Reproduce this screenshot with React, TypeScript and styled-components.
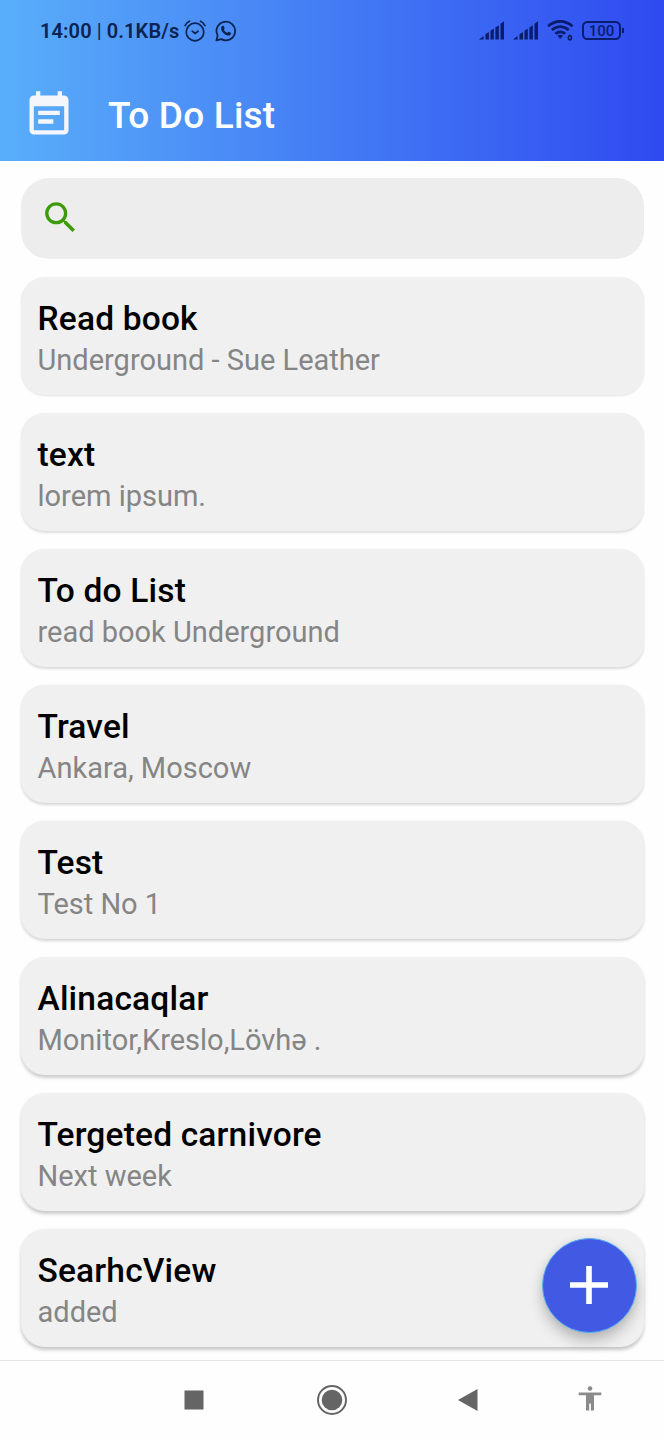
import React from "react";
import styled, { createGlobalStyle } from "styled-components";

const GlobalStyle = createGlobalStyle`
  * { box-sizing: border-box; }
  body { margin: 0; background: #fff; font-family: Roboto, "Noto Sans", sans-serif; }
  h1, h2, p { margin: 0; }
  svg { display: block; flex: none; }
`;

const Screen = styled.div`
  position: relative;
  width: 664px;
  height: 1440px;
  display: flex;
  flex-direction: column;
  overflow: hidden;
  background: #fefefe;
`;

const Header = styled.header`
  height: 160.5px;
  flex: none;
  background: linear-gradient(90deg, #59aefa 0%, #447cf4 50%, #2f4af0 100%);
`;

const StatusBar = styled.div`
  height: 62px;
  padding: 0 43px 0 40px;
  display: flex;
  align-items: center;
  justify-content: space-between;
  color: #0b2350;
`;

const StatusGroup = styled.div<{ $gap: number }>`
  display: flex;
  align-items: center;
  gap: ${(p) => p.$gap}px;
`;

const StatusText = styled.span`
  width: 139px;
  font-size: 20px;
  line-height: 24px;
  font-weight: 600;
  letter-spacing: 0.1px;
  white-space: pre;
`;

const Divider = styled.span`
  font-weight: 400;
`;

const TitleBar = styled.div`
  display: flex;
  align-items: center;
  height: 98px;
  padding: 0 22.5px;
  gap: 33.5px;
`;

const CalendarIcon = styled.svg`
  width: 52px;
  height: 52px;
  margin-top: 7px;
`;

const AppTitle = styled.h1`
  font-size: 37px;
  line-height: 44px;
  font-weight: 500;
  letter-spacing: 0.2px;
  color: #fff;
  padding-top: 9px;
`;

const Content = styled.main`
  flex: 1;
  min-height: 0;
  padding: 17.5px 20.5px 0;
`;

const SearchBox = styled.div`
  height: 80.5px;
  border-radius: 28px;
  background: #ededed;
  padding: 0 0 1px 19px;
  display: flex;
  align-items: center;
  color: #3c9a0b;
`;

const List = styled.div`
  display: flex;
  flex-direction: column;
  gap: 17.5px;
  margin-top: 18px;
`;

const Card = styled.article<{ $depth: number }>`
  height: 118.5px;
  flex: none;
  border-radius: 24px;
  background: #f0f0f0;
  padding: 22px 17px 0;
  box-shadow: 0 ${(p) => 1 + p.$depth * 0.22}px ${(p) => 2 + p.$depth * 0.25}px
    rgba(0, 0, 0, ${(p) => 0.11 + p.$depth * 0.015});
`;

const CardTitle = styled.h2`
  font-size: 33.5px;
  line-height: 40px;
  font-weight: 500;
  letter-spacing: 0.18px;
  color: #000;
`;

const CardText = styled.p`
  font-size: 29px;
  line-height: 34px;
  margin-top: 4px;
  color: #858585;
`;

const AddButton = styled.button`
  position: absolute;
  left: 542px;
  top: 1238px;
  width: 95px;
  height: 95px;
  padding: 0 1px 1px 0;
  border: 1px solid #58b0f4;
  border-radius: 50%;
  background: #4259e3;
  display: flex;
  align-items: center;
  justify-content: center;
  box-shadow: 0 8px 14px rgba(0, 0, 0, 0.22), 0 1px 8px rgba(0, 0, 0, 0.06);
`;

const NavBar = styled.nav`
  height: 80px;
  flex: none;
  border-top: 1px solid #e3e3e3;
  background: #fefefe;
  padding: 0 7px 1.5px 125px;
  display: grid;
  grid-template-columns: 138px 138px 134px 110px;
  align-items: center;
  justify-items: center;
  color: #656565;
`;

const todos = [
  { title: "Read book", text: "Underground - Sue Leather" },
  { title: "text", text: "lorem ipsum." },
  { title: "To do List", text: "read book Underground" },
  { title: "Travel", text: "Ankara, Moscow" },
  { title: "Test", text: "Test No 1" },
  { title: "Alinacaqlar", text: "Monitor,Kreslo,Lövhə ." },
  { title: "Tergeted carnivore", text: "Next week" },
  { title: "SearhcView", text: "added" },
];

const AlarmIcon = () => (
  <svg width="22" height="22" viewBox="0 0 22 22" fill="none" stroke="currentColor" strokeWidth="1.7" strokeLinecap="round">
    <circle cx="11" cy="12" r="8.8" />
    <path d="M1.1 5.5Q2.5 2.6 5.4 1.2M20.9 5.5Q19.5 2.6 16.6 1.2M8.2 11.2L11 13.4L14 11.2" />
  </svg>
);

const WhatsAppIcon = () => (
  <svg width="22" height="22" viewBox="0 0 22 22">
    <path d="M1.4 20.4L2.7 15.5A9.3 9.3 0 1 1 6.3 19.1Z" fill="none" stroke="currentColor" strokeWidth="1.8" strokeLinejoin="round" />
    <path d="M7.5 5.8c.5-.2 1-.1 1.200.3l.9 2.100c.1.4-.7 1.200-.7 1.600.7 1.400 1.800 2.400 3.300 3 .4 0 1-1.200 1.500-1.100l2.100 1c.5.4.2 1.700-.6 2.300-1.400 1.100-3.800.3-5.700-1.100-1.800-1.400-3.400-3.300-3.400-5.500 0-1.200.6-2.200 1.400-2.600z" fill="currentColor" />
  </svg>
);

const SignalIcon = () => (
  <svg width="26" height="19" viewBox="0 0 26 19" fill="currentColor">
    <path d="M0 18.500L4.600 15V18.500ZM6.500 13.200L9.900 11V18.500H6.500ZM11.500 9.800L14.800 7.600V18.500H11.500ZM16.400 6.500L19.800 4.200V18.500H16.400ZM21.500 2.800L25 .3V18.500H21.500Z" />
  </svg>
);

const WifiIcon = () => (
  <svg width="27" height="21" viewBox="0 0 27 21" fill="none" stroke="currentColor">
    <path d="M1 6.200Q13.200-3.600 25.600 6.200M4.800 10Q13.200 3.200 21.800 10M8.400 13.800Q13.200 9.800 18.200 13.800" strokeWidth="2.700" />
    <path d="M10.400 15.800Q13.200 13.600 16 15.800L13.200 19Z" fill="currentColor" stroke="none" />
    <ellipse cx="22.900" cy="17.700" rx="1.500" ry="2.200" strokeWidth="1.600" />
  </svg>
);

const BatteryShell = styled.div`
  position: relative;
  width: 39px;
  height: 19px;
  border: 2px solid currentColor;
  border-radius: 5.5px;
  font-size: 15px;
  line-height: 16px;
  font-weight: 500;
  text-align: center;
  &::after {
    content: "";
    position: absolute;
    right: -5px;
    top: 5px;
    width: 2px;
    height: 5px;
    background: currentColor;
  }
`;

const RightStatus = styled(StatusGroup)`
  color: #0a1c6c;
  padding-bottom: 2px;
`;

export default function App() {
  return (
    <Screen>
      <GlobalStyle />
      <Header>
        <StatusBar>
          <StatusGroup $gap={5}>
            <StatusText>
              14:00 <Divider>|</Divider> 0.1KB/s
            </StatusText>
            <StatusGroup $gap={9}>
              <AlarmIcon />
              <WhatsAppIcon />
            </StatusGroup>
          </StatusGroup>
          <RightStatus $gap={8}>
            <SignalIcon />
            <SignalIcon />
            <WifiIcon />
            <BatteryShell>100</BatteryShell>
          </RightStatus>
        </StatusBar>
        <TitleBar>
          <CalendarIcon viewBox="0 0 24 24" fill="#f4f6fc">
            <path d="M17 10H7v2h10v-2zm2-7h-1V1h-2v2H8V1H6v2H5c-1.110 0-1.990.9-1.990 2L3 19c0 1.100.89 2 2 2h14c1.100 0 2-.9 2-2V5c0-1.100-.9-2-2-2zm0 16H5V8h14v11zm-5-5H7v2h7v-2z" />
          </CalendarIcon>
          <AppTitle>To Do List</AppTitle>
        </TitleBar>
      </Header>
      <Content>
        <SearchBox>
          <svg width="41" height="41" viewBox="0 0 24 24" fill="currentColor">
            <path d="M15.500 14h-.79l-.28-.27C15.410 12.590 16 11.110 16 9.500 16 5.910 13.090 3 9.500 3S3 5.910 3 9.500 5.910 16 9.500 16c1.610 0 3.090-.59 4.230-1.570l.27.28v.79l5 4.990L20.490 19l-4.990-5zm-6 0C7.010 14 5 11.990 5 9.500S7.010 5 9.500 5 14 7.010 14 9.500 11.990 14 9.500 14z" />
          </svg>
        </SearchBox>
        <List>
          {todos.map((todo, i) => (
            <Card key={todo.title} $depth={i}>
              <CardTitle>{todo.title}</CardTitle>
              <CardText>{todo.text}</CardText>
            </Card>
          ))}
        </List>
      </Content>
      <NavBar>
        <svg width="20" height="20" viewBox="0 0 20 20">
          <rect x=".5" y=".5" width="19" height="19" fill="currentColor" />
        </svg>
        <svg width="30" height="30" viewBox="0 0 30 30">
          <circle cx="15" cy="15" r="14" fill="none" stroke="currentColor" strokeWidth="2" />
          <circle cx="15" cy="15" r="10.300" fill="currentColor" />
        </svg>
        <svg width="20" height="22" viewBox="0 0 20 22">
          <path d="M0 11L19.500 0V22Z" fill="currentColor" />
        </svg>
        <svg width="24" height="27" viewBox="0 0 24 27" fill="#8b8b8b">
          <circle cx="12" cy="2.500" r="2.300" />
          <path d="M.7 6.500H23.300V9.300H16V24.500H12.900V17.500H11.200V24.500H8V9.300H.7Z" />
        </svg>
      </NavBar>
      <AddButton aria-label="Add">
        <svg width="40" height="40" viewBox="0 0 40 40">
          <path d="M17.200 1H22.800V17.200H39V22.800H22.800V39H17.200V22.800H1V17.200H17.200Z" fill="#fff" />
        </svg>
      </AddButton>
    </Screen>
  );
}
